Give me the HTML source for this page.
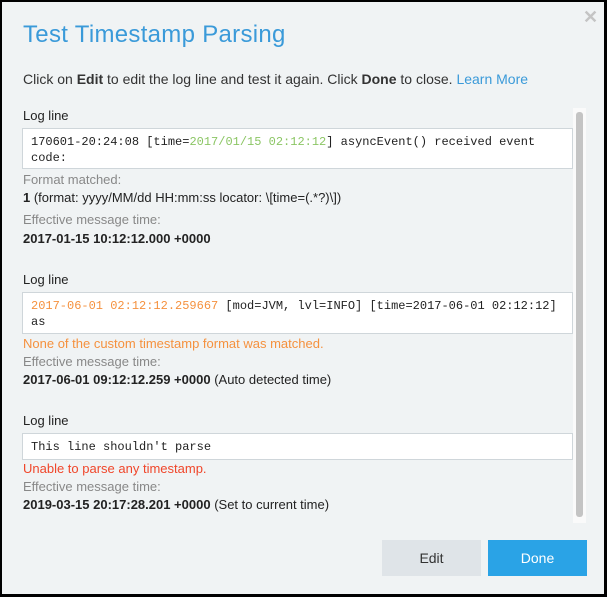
<!DOCTYPE html>
<html><head><style>
*{margin:0;padding:0;box-sizing:border-box}
html,body{width:607px;height:597px;overflow:hidden;background:#000}
.d{position:absolute;left:2px;top:2px;width:602px;height:592px;background:#f0f3f4;font-family:"Liberation Sans",sans-serif;color:#222}
.a{position:absolute;white-space:nowrap}
.t{left:21px;top:19px;font-size:24px;color:#3a9ad9;letter-spacing:0.3px}
.x{left:581px;top:5px;font-size:18px;color:#c4c4c4;font-weight:bold}
.i{left:21px;top:69px;font-size:14px;color:#333}
.l{font-size:13px;color:#222;left:21px}
.box{position:absolute;left:20px;width:551px;background:#fff;border:1px solid #cfd6da;font-family:"Liberation Mono",monospace;font-size:12px;padding:5px 8px;line-height:16px;color:#222}
.g{color:#888;font-size:13px;left:21px}
.v{font-size:13px;left:21px;color:#222}
b{font-weight:bold}
.sb{position:absolute;left:571px;top:106px;width:13px;height:415px;background:#fafafa}
.th{position:absolute;left:574px;top:110px;width:7px;height:405px;background:#c4c4c4;border-radius:3px}
.btn{position:absolute;top:538px;width:99px;height:36px;font-size:14px;text-align:center;line-height:36px}
</style></head><body><div class="d">
<div class="a t">Test Timestamp Parsing</div>
<div class="a x">✕</div>
<div class="a i">Click on <b>Edit</b> to edit the log line and test it again. Click <b>Done</b> to close. <span style="color:#3a9ad9">Learn More</span></div>
<div class="sb"></div><div class="th"></div>

<div class="a l" style="top:106px">Log line</div>
<div class="box" style="top:126px;height:41px">170601-20:24:08 [time=<span style="color:#8cc665">2017/01/15 02:12:12</span>] asyncEvent() received event<br>code:</div>
<div class="a g" style="top:170px">Format matched:</div>
<div class="a v" style="top:188px"><b>1</b> (format: yyyy/MM/dd HH:mm:ss locator: \[time=(.*?)\])</div>
<div class="a g" style="top:210px">Effective message time:</div>
<div class="a v" style="top:229px"><b>2017-01-15 10:12:12.000 +0000</b></div>

<div class="a l" style="top:270px">Log line</div>
<div class="box" style="top:290px;height:42px"><span style="color:#f5913e">2017-06-01 02:12:12.259667</span> [mod=JVM, lvl=INFO] [time=2017-06-01 02:12:12]<br>as</div>
<div class="a g" style="top:334px;color:#f5913e">None of the custom timestamp format was matched.</div>
<div class="a g" style="top:352px">Effective message time:</div>
<div class="a v" style="top:370px"><b>2017-06-01 09:12:12.259 +0000</b> (Auto detected time)</div>

<div class="a l" style="top:411px">Log line</div>
<div class="box" style="top:431px;height:27px">This line shouldn't parse</div>
<div class="a g" style="top:459px;color:#f0462a">Unable to parse any timestamp.</div>
<div class="a g" style="top:477px">Effective message time:</div>
<div class="a v" style="top:495px"><b>2019-03-15 20:17:28.201 +0000</b> (Set to current time)</div>

<div class="btn" style="left:380px;background:#dfe4e8;color:#333">Edit</div>
<div class="btn" style="left:486px;background:#2aa3e6;color:#fff">Done</div>
</div></body></html>
